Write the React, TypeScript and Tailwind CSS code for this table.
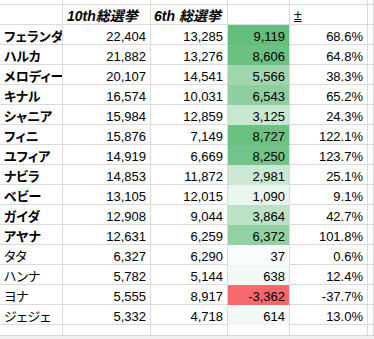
const rows = [
  { name: 'フェランダ', a: '22,404', b: '13,285', d: '9,119', p: '68.6%', fill: 'bg-[#63BE7B]', bold: true },
  { name: 'ハルカ', a: '21,882', b: '13,276', d: '8,606', p: '64.8%', fill: 'bg-[#6CC182]', bold: true },
  { name: 'メロディー', a: '20,107', b: '14,541', d: '5,566', p: '38.3%', fill: 'bg-[#9FD6AE]', bold: true },
  { name: 'キナル', a: '16,574', b: '10,031', d: '6,543', p: '65.2%', fill: 'bg-[#8ECFA0]', bold: true },
  { name: 'シャニア', a: '15,984', b: '12,859', d: '3,125', p: '24.3%', fill: 'bg-[#C8E7D2]', bold: true },
  { name: 'フィニ', a: '15,876', b: '7,149', d: '8,727', p: '122.1%', fill: 'bg-[#6AC181]', bold: true },
  { name: 'ユフィア', a: '14,919', b: '6,669', d: '8,250', p: '123.7%', fill: 'bg-[#72C488]', bold: true },
  { name: 'ナビラ', a: '14,853', b: '11,872', d: '2,981', p: '25.1%', fill: 'bg-[#CAE8D4]', bold: true },
  { name: 'ベビー', a: '13,105', b: '12,015', d: '1,090', p: '9.1%', fill: 'bg-[#EAF5EF]', bold: true },
  { name: 'ガイダ', a: '12,908', b: '9,044', d: '3,864', p: '42.7%', fill: 'bg-[#BBE2C7]', bold: true },
  { name: 'アヤナ', a: '12,631', b: '6,259', d: '6,372', p: '101.8%', fill: 'bg-[#91D1A3]', bold: true },
  { name: 'タタ', a: '6,327', b: '6,290', d: '37', p: '0.6%', fill: 'bg-[#FBFCFE]', bold: false },
  { name: 'ハンナ', a: '5,782', b: '5,144', d: '638', p: '12.4%', fill: 'bg-[#F1F8F6]', bold: false },
  { name: 'ヨナ', a: '5,555', b: '8,917', d: '-3,362', p: '-37.7%', fill: 'bg-[#F8696B]', bold: false },
  { name: 'ジェジェ', a: '5,332', b: '4,718', d: '614', p: '13.0%', fill: 'bg-[#F2F8F6]', bold: false },
];

const line = 'border-r border-b border-[#dadada]';
const num = `h-[20px] ${line} flex items-end justify-end pr-[4px] pb-[1px] leading-none text-[13px] text-black whitespace-nowrap`;
const jp = "[font-family:'Liberation_Sans','Noto_Sans_CJK_JP',sans-serif] [font-feature-settings:'palt']";

export default function App() {
  return (
    <div className="w-[374px] h-[339px] overflow-hidden bg-white flex flex-col [font-family:'Liberation_Sans',sans-serif]">
      <div className="grid grid-cols-[63px_88px_77px_62px_78px_6px]">
        {/* partial row above the header */}
        <div className={`h-[5px] ${line}`} />
        <div className={`h-[5px] ${line}`} />
        <div className={`h-[5px] ${line}`} />
        <div className={`h-[5px] ${line}`} />
        <div className={`h-[5px] ${line}`} />
        <div className={`h-[5px] ${line}`} />

        {/* header */}
        <div className={`h-[20px] ${line}`} />
        <div className={`h-[20px] ${line} ${jp} flex items-end pl-[4px] pb-[1px] leading-none text-[14px] font-bold italic text-black whitespace-nowrap`}>
          10th総選挙
        </div>
        <div className={`h-[20px] ${line} ${jp} flex items-end pl-[3px] pb-[1px] leading-none text-[14px] font-bold italic text-black whitespace-nowrap`}>
          6th 総選挙
        </div>
        <div className={`h-[20px] ${line}`} />
        <div className={`h-[20px] ${line} flex items-end pl-[4px] pb-[2px] leading-none text-[14px] text-black`}>
          <span className="underline">±</span>
        </div>
        <div className={`h-[20px] ${line}`} />

        {rows.map((r) => (
          <div key={r.name} className="contents">
            <div
              className={`h-[20px] ${line} ${jp} flex items-end pl-[4px] pb-[1px] leading-none text-[13px] text-black overflow-hidden whitespace-nowrap ${r.bold ? 'font-bold' : 'font-normal'}`}
            >
              {r.name}
            </div>
            <div className={num}>{r.a}</div>
            <div className={num}>{r.b}</div>
            <div className={`${num} ${r.fill} border-b-transparent`}>{r.d}</div>
            <div className={num}>{r.p}</div>
            <div className={`h-[20px] ${line}`} />
          </div>
        ))}

        {/* empty row cut off by the window */}
        <div className="h-[10px] border-r border-[#dadada]" />
        <div className="h-[10px] border-r border-[#dadada]" />
        <div className="h-[10px] border-r border-[#dadada]" />
        <div className="h-[10px] border-r border-[#dadada]" />
        <div className="h-[10px] border-r border-[#dadada]" />
        <div className="h-[10px] border-r border-[#dadada]" />
      </div>
      <div className="h-[4px] bg-[#f0f0f0] border-t border-[#d4d4d4]" />
    </div>
  );
}
